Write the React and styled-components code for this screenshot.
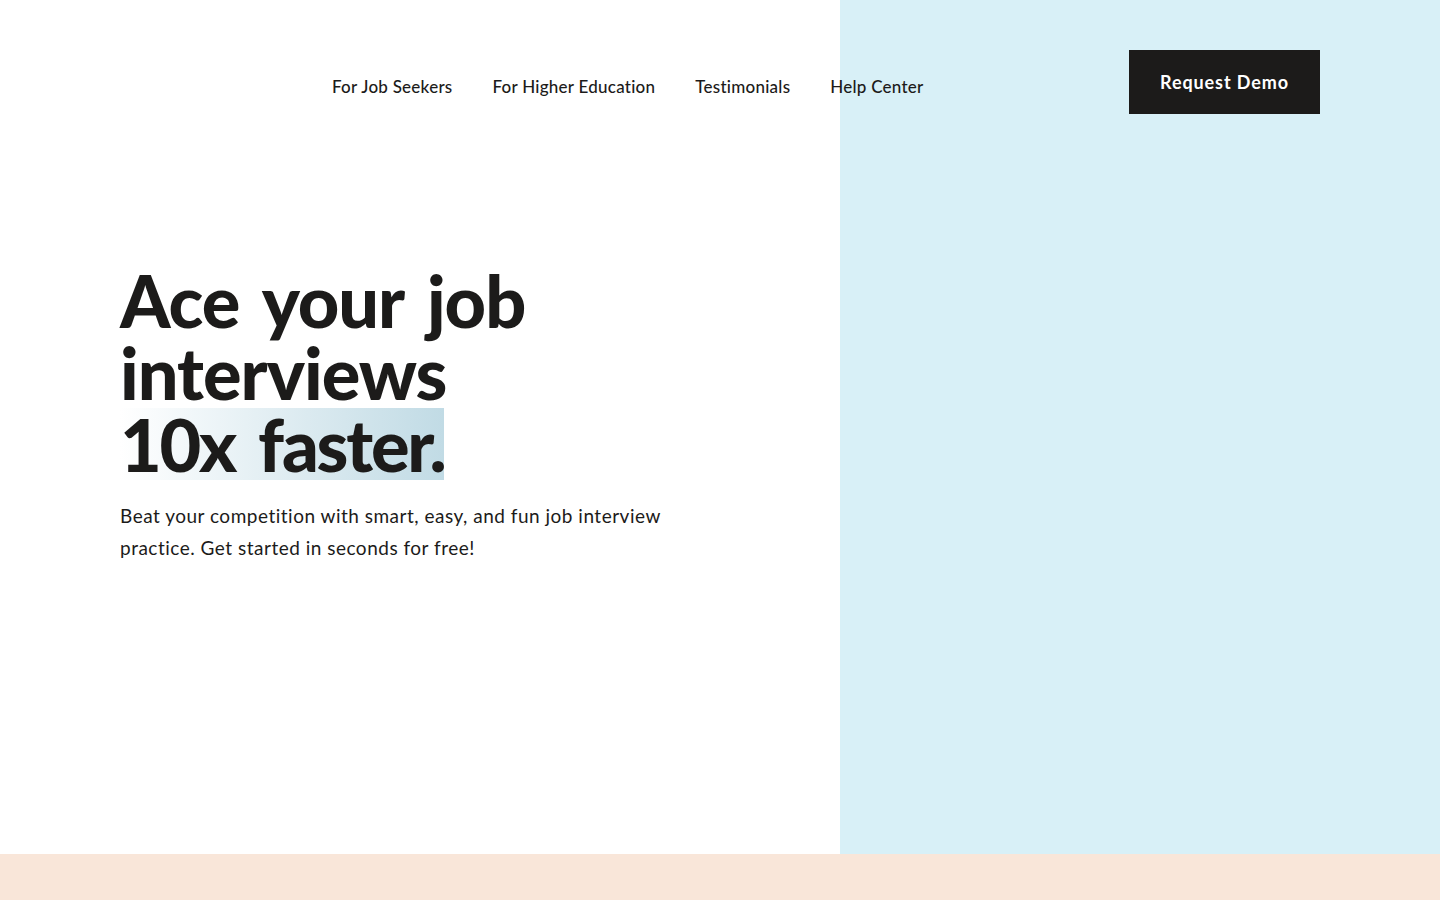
import React from "react";
import styled, { createGlobalStyle } from "styled-components";

const Global = createGlobalStyle`
  html, body { margin: 0; padding: 0; }
  body { font-family: "Lato", "Noto Sans", sans-serif; color: #1c1b1a; background: #fff; }
  * { box-sizing: border-box; }
`;

const Page = styled.div`
  width: 1440px;
  min-height: 900px;
  display: flex;
  flex-direction: column;
  overflow: hidden;
`;

const Hero = styled.section`
  position: relative;
  display: grid;
  grid-template-columns: 840px 1fr;
  height: 854px;
`;

const LeftCol = styled.div`
  background: #ffffff;
  padding: 264px 0 0 120px;
`;

const RightCol = styled.div`
  background: #d8f0f7;
`;

const Header = styled.header`
  position: absolute;
  top: 0;
  left: 0;
  right: 0;
  height: 164px;
  display: flex;
  align-items: flex-start;
  padding: 50px 120px 0 332px;
`;

const Nav = styled.nav`
  display: flex;
  gap: 40px;
  margin-top: 25px;
`;

const NavLink = styled.a`
  font-size: 17px;
  font-weight: 500;
  line-height: 24px;
  letter-spacing: 0.25px;
  color: #1c1b1a;
  text-decoration: none;
  white-space: nowrap;
`;

const DemoButton = styled.button`
  margin-left: auto;
  width: 191px;
  height: 64px;
  border: none;
  background: #1c1b1a;
  color: #ffffff;
  font-family: inherit;
  font-size: 18px;
  font-weight: 700;
  letter-spacing: 0.9px;
  cursor: pointer;
`;

const Title = styled.h1`
  margin: 0;
  font-size: 72px;
  line-height: 72px;
  font-weight: 900;
  letter-spacing: -1px;
  word-spacing: 8px;
  color: #1c1b1a;
`;

const Highlight = styled.span`
  display: inline-block;
  letter-spacing: -2.2px;
  background: linear-gradient(90deg, #ffffff 0%, #c1dbe5 100%);
`;

const Lead = styled.p`
  margin: 20px 0 0;
  max-width: 560px;
  font-size: 19px;
  line-height: 32px;
  font-weight: 400;
  letter-spacing: 0.5px;
  color: #1c1b1a;
`;

const Band = styled.div`
  flex: 1;
  min-height: 46px;
  background: #f9e6d9;
`;

export default function App() {
  return (
    <>
      <Global />
      <Page>
        <Hero>
          <LeftCol>
            <Title>
              Ace your job
              <br />
              interviews
              <br />
              <Highlight>10x faster.</Highlight>
            </Title>
            <Lead>
              Beat your competition with smart, easy, and fun job interview
              practice. Get started in seconds for free!
            </Lead>
          </LeftCol>
          <RightCol />
          <Header>
            <Nav>
              <NavLink href="#">For Job Seekers</NavLink>
              <NavLink href="#">For Higher Education</NavLink>
              <NavLink href="#">Testimonials</NavLink>
              <NavLink href="#">Help Center</NavLink>
            </Nav>
            <DemoButton>Request Demo</DemoButton>
          </Header>
        </Hero>
        <Band />
      </Page>
    </>
  );
}
